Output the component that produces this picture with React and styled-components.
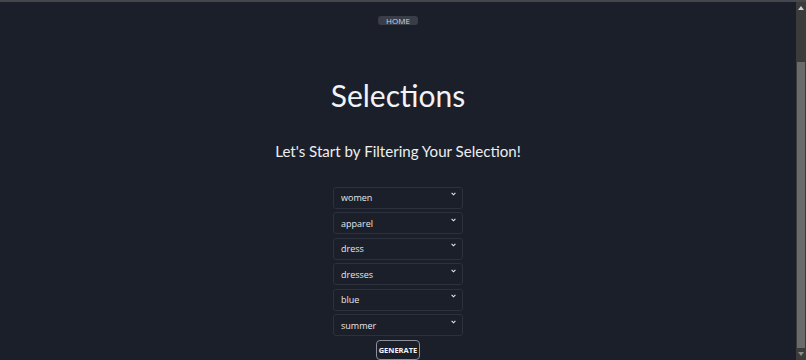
import React from "react";
import styled, { createGlobalStyle } from "styled-components";

const GlobalStyle = createGlobalStyle`
  html, body {
    margin: 0;
    padding: 0;
    height: 360px;
    overflow: hidden;
    background: #1b1f2a;
  }
  body {
    font-family: "Open Sans", "Noto Sans", sans-serif;
  }
`;

const Frame = styled.div`
  display: flex;
  flex-direction: column;
  height: 360px;
`;

const TopBar = styled.div`
  height: 2px;
  background: #45474c;
`;

const Body = styled.div`
  flex: 1;
  display: flex;
  min-height: 0;
`;

const Main = styled.main`
  flex: 1;
  display: flex;
  flex-direction: column;
  align-items: center;
  padding-top: 14px;
`;

const HomeButton = styled.button`
  height: 9px;
  padding: 0 8px;
  border: none;
  border-radius: 3px;
  background: #3a3d48;
  color: #d0d1d6;
  font-family: "Open Sans", sans-serif;
  font-size: 8px;
  line-height: 9px;
  text-transform: uppercase;
  cursor: pointer;
`;

const Title = styled.h1`
  margin: 50px 0 0;
  color: #f2f3f5;
  font-family: Lato, "Open Sans", sans-serif;
  font-weight: 400;
  font-size: 30px;
  line-height: 40px;
`;

const Subtitle = styled.h2`
  margin: 25px 0 0;
  color: #eceef1;
  font-family: Lato, "Open Sans", sans-serif;
  font-weight: 400;
  font-size: 15.1px;
  line-height: 22px;
`;

const Filters = styled.form`
  display: flex;
  flex-direction: column;
  align-items: center;
  gap: 3.5px;
  margin-top: 22px;
`;

const SelectWrap = styled.div`
  position: relative;
  width: 130px;
  height: 22px;
`;

const Select = styled.select`
  appearance: none;
  width: 100%;
  height: 100%;
  box-sizing: border-box;
  padding: 0 0 0 7px;
  background: #1b1f2a;
  border: 1px solid #2c313d;
  border-radius: 3px;
  color: #e6e8eb;
  font-family: "Open Sans", sans-serif;
  font-size: 9px;
  outline: none;
`;

const Chevron = styled.svg`
  position: absolute;
  right: 7px;
  top: 8px;
  width: 5px;
  height: 4px;
  pointer-events: none;
`;

const GenerateButton = styled.button`
  margin-top: 3px;
  height: 20px;
  padding: 0 2px;
  background: #1b1f2a;
  border: 1px solid #8d9099;
  border-radius: 4px;
  color: #f3f4f6;
  font-family: "Open Sans", sans-serif;
  font-weight: 700;
  font-size: 7.5px;
  cursor: pointer;
`;

const ScrollTrack = styled.div`
  width: 10px;
  display: flex;
  flex-direction: column;
  background: #3b3b3b;
`;

const Arrow = styled.div`
  height: 12px;
  display: flex;
  align-items: center;
  justify-content: center;
`;

const Gap = styled.div`
  height: 48px;
`;

const Thumb = styled.div`
  flex: 1;
  margin: 0 1px;
  background: #6a6a6a;
`;

const filters = [
  ["women", "men", "kids"],
  ["apparel", "shoes", "accessories"],
  ["dress", "top", "pants"],
  ["dresses", "skirts", "jumpsuits"],
  ["blue", "red", "black"],
  ["summer", "winter", "spring"],
];

const FilterSelect = ({ options }) => (
  <SelectWrap>
    <Select defaultValue={options[0]}>
      {options.map((o) => (
        <option key={o}>{o}</option>
      ))}
    </Select>
    <Chevron viewBox="0 0 5 4">
      <path d="M0.6 0.8 L2.5 2.8 L4.4 0.8" stroke="#e8e9ec" strokeWidth="1.1" fill="none" />
    </Chevron>
  </SelectWrap>
);

export default function App() {
  return (
    <Frame>
      <GlobalStyle />
      <TopBar />
      <Body>
        <Main>
          <HomeButton>Home</HomeButton>
          <Title>Selections</Title>
          <Subtitle>Let's Start by Filtering Your Selection!</Subtitle>
          <Filters onSubmit={(e) => e.preventDefault()}>
            {filters.map((opts) => (
              <FilterSelect key={opts[0]} options={opts} />
            ))}
            <GenerateButton type="submit">GENERATE</GenerateButton>
          </Filters>
        </Main>
        <ScrollTrack>
          <Arrow>
            <svg width="6" height="4" viewBox="0 0 6 4">
              <path d="M0 4 L3 0 L6 4 Z" fill="#d0d0d0" />
            </svg>
          </Arrow>
          <Gap />
          <Thumb />
          <Arrow>
            <svg width="6" height="4" viewBox="0 0 6 4">
              <path d="M0 0 L3 4 L6 0 Z" fill="#8a8a8a" />
            </svg>
          </Arrow>
        </ScrollTrack>
      </Body>
    </Frame>
  );
}
